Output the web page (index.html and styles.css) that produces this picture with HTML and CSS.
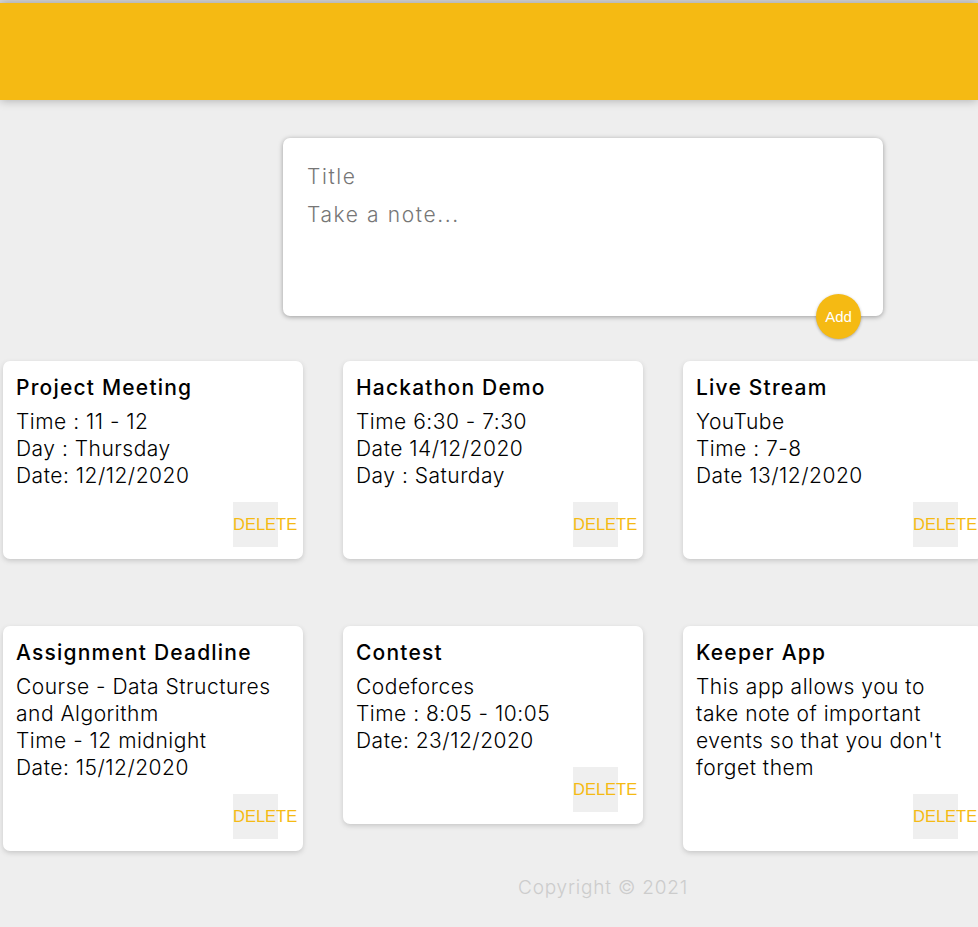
FILE: index.html
```html
<!DOCTYPE html>
<html lang="en">
<head>
<meta charset="utf-8">
<title>Keeper</title>
<link rel="stylesheet" href="styles.css">
</head>
<body>
<div class="page">
  <header class="header"></header>
  <main class="main">
    <form class="create">
      <input class="create-title" type="text" placeholder="Title">
      <textarea class="create-content" rows="3" placeholder="Take a note..."></textarea>
      <button class="add-btn" type="button">Add</button>
    </form>
    <section class="notes">
      <article class="note">
        <h1 class="note-title">Project Meeting</h1>
        <p class="note-text">Time : 11 - 12<br>Day : Thursday<br>Date: 12/12/2020</p>
        <button class="delete-btn" type="button">DELETE</button>
      </article>
      <article class="note">
        <h1 class="note-title">Hackathon Demo</h1>
        <p class="note-text">Time 6:30 - 7:30<br>Date 14/12/2020<br>Day : Saturday</p>
        <button class="delete-btn" type="button">DELETE</button>
      </article>
      <article class="note">
        <h1 class="note-title">Live Stream</h1>
        <p class="note-text">YouTube<br>Time : 7-8<br>Date 13/12/2020</p>
        <button class="delete-btn" type="button">DELETE</button>
      </article>
      <article class="note">
        <h1 class="note-title">Assignment Deadline</h1>
        <p class="note-text">Course - Data Structures<br>and Algorithm<br>Time - 12 midnight<br>Date: 15/12/2020</p>
        <button class="delete-btn" type="button">DELETE</button>
      </article>
      <article class="note">
        <h1 class="note-title">Contest</h1>
        <p class="note-text">Codeforces<br>Time : 8:05 - 10:05<br>Date: 23/12/2020</p>
        <button class="delete-btn" type="button">DELETE</button>
      </article>
      <article class="note">
        <h1 class="note-title">Keeper App</h1>
        <p class="note-text">This app allows you to<br>take note of important<br>events so that you don't<br>forget them</p>
        <button class="delete-btn" type="button">DELETE</button>
      </article>
    </section>
  </main>
  <footer class="footer">Copyright &copy; 2021</footer>
</div>
</body>
</html>
```

FILE: styles.css
```css
html, body {
  margin: 0;
  padding: 0;
  overflow: hidden;
}

body {
  background: #eeeeee;
  font-family: Inter, "Open Sans", sans-serif;
  color: #000;
}

.page {
  border-top: 3px solid #dadada;
  min-height: 924px;
}

.header {
  height: 97px;
  background: #f5ba13;
  box-shadow: 0 0 10px 0 rgba(0, 0, 0, 0.3);
}

.main {
  display: flex;
  flex-direction: column;
}

.create {
  position: relative;
  box-sizing: border-box;
  width: 600px;
  height: 178px;
  margin: 38px 0 0 283px;
  padding: 25px 24px 0;
  background: #fff;
  border-radius: 7px;
  box-shadow: 0 1px 5px rgba(0, 0, 0, 0.35);
  display: flex;
  flex-direction: column;
}

.create-title,
.create-content {
  border: none;
  outline: none;
  padding: 0;
  margin: 0;
  font-family: inherit;
  font-size: 21px;
  line-height: 28px;
  font-weight: 300;
  letter-spacing: 1.6px;
  color: #444;
  background: transparent;
  resize: none;
}

.create-title::placeholder,
.create-content::placeholder {
  color: #767676;
}

.create-content {
  margin-top: 10px;
}

.add-btn {
  position: absolute;
  right: 22px;
  bottom: -23px;
  width: 45px;
  height: 45px;
  border-radius: 50%;
  border: none;
  padding: 0;
  background: #f5ba13;
  color: #fff;
  font-family: "Liberation Sans", Arial, sans-serif;
  font-size: 15px;
  box-shadow: 0 1px 3px rgba(0, 0, 0, 0.3);
}

.notes {
  width: 1020px;
  margin: 45px 0 0 3px;
  display: flex;
  flex-wrap: wrap;
  align-items: flex-start;
  column-gap: 40px;
  row-gap: 67px;
}

.note {
  box-sizing: border-box;
  width: 300px;
  padding: 15px 13px 12px;
  background: #fff;
  border-radius: 7px;
  box-shadow: 0 2px 5px #c8c8c8;
  display: flex;
  flex-direction: column;
}

.note-title {
  margin: 0 0 8px;
  font-size: 21px;
  line-height: 24px;
  font-weight: 500;
  letter-spacing: 1.2px;
}

.note-text {
  margin: 0;
  font-size: 21px;
  line-height: 27px;
  font-weight: 300;
  letter-spacing: 0.5px;
  white-space: nowrap;
}

.delete-btn {
  align-self: flex-end;
  margin: 13px 12px 0 0;
  width: 45px;
  height: 45px;
  padding: 0;
  border: none;
  background: #efefef;
  color: #f5ba13;
  font-family: "Liberation Sans", Arial, sans-serif;
  font-size: 16.5px;
  text-align: left;
  white-space: nowrap;
  overflow: visible;
}

.footer {
  width: 600px;
  margin: 25px 0 0 303px;
  text-align: center;
  color: #cccccc;
  font-size: 19px;
  line-height: 24px;
  font-weight: 300;
  letter-spacing: 0.8px;
}
```
